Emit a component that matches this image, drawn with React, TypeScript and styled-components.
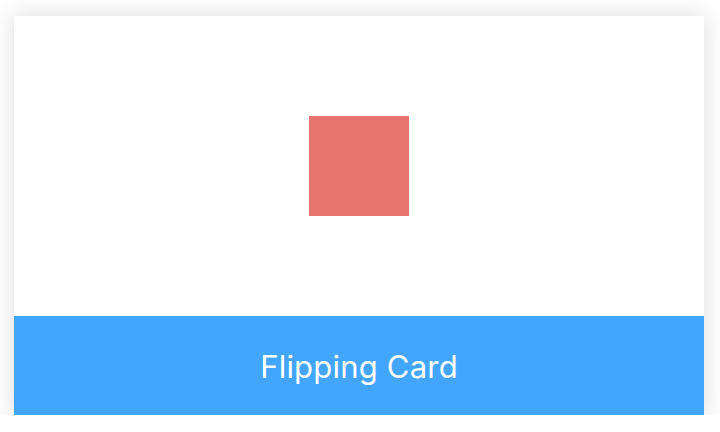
import React from "react";
import styled, { createGlobalStyle } from "styled-components";

const Global = createGlobalStyle`
  html, body { margin: 0; padding: 0; background: #ffffff; }
  body { font-family: Inter, "Liberation Sans", Arial, sans-serif; }
`;

const Stage = styled.div`
  height: 415px;
  overflow: hidden;
  padding: 16px 16px 0 14px;
  box-sizing: border-box;
`;

const Card = styled.div`
  width: 690px;
  height: 399px;
  display: flex;
  flex-direction: column;
  background: #ffffff;
  box-shadow: 0 0 20px 2px rgba(0, 0, 0, 0.12);
`;

const Face = styled.div`
  height: 300px;
  display: flex;
  align-items: center;
  justify-content: center;
`;

const Square = styled.div`
  width: 100px;
  height: 100px;
  background: #e87570;
`;

const Footer = styled.div`
  flex: 1;
  background: #42a6ff;
  color: #ffffff;
  display: flex;
  align-items: center;
  justify-content: center;
  font-family: Inter, "Liberation Sans", Arial, sans-serif;
  font-size: 31px;
  letter-spacing: 0.2px;
  padding-top: 1px;
  box-sizing: border-box;
`;

export default function App() {
  return (
    <>
      <Global />
      <Stage>
        <Card>
          <Face>
            <Square />
          </Face>
          <Footer>Flipping Card</Footer>
        </Card>
      </Stage>
    </>
  );
}
